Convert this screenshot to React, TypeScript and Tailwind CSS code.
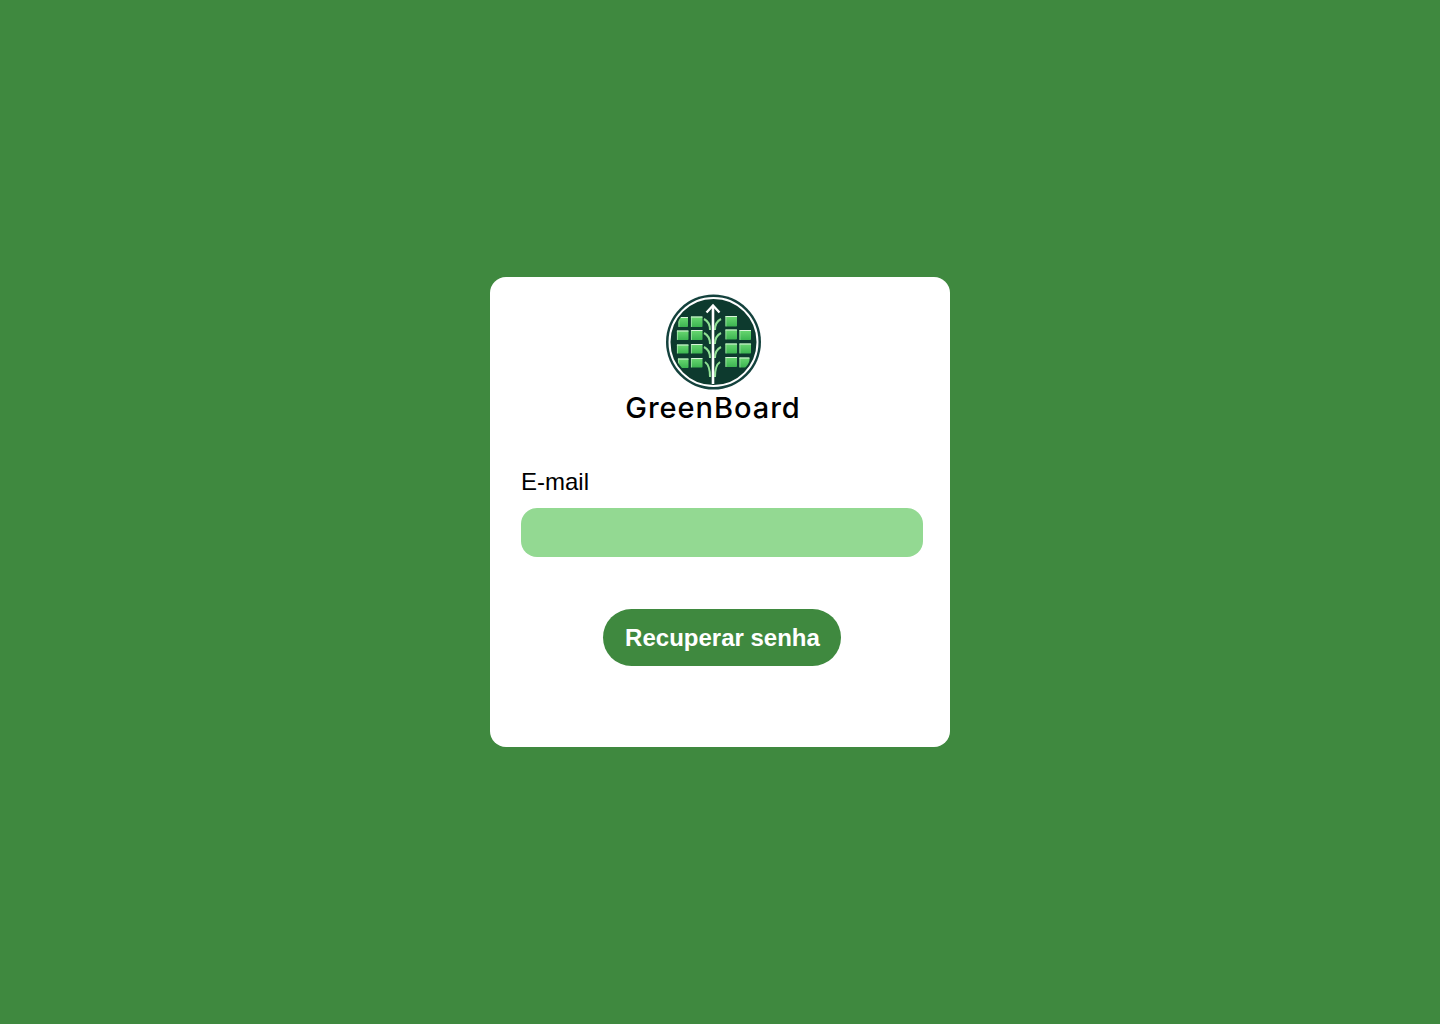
import React from 'react';

const squares = [
  [12.5, 23, 9.5, 10], [25, 22.5, 11.5, 10.5],
  [11, 36.5, 11.5, 9.5], [25, 36, 11.5, 10],
  [11, 50.5, 11.5, 9], [25, 50, 11.5, 9.5],
  [12, 64.5, 10.5, 9.5], [25, 64, 11.5, 9.5],
  [59.5, 22, 11.5, 10.5],
  [59.5, 35.5, 11.5, 10], [73.5, 36, 11.5, 10],
  [59.5, 49.5, 11.5, 10], [73.5, 49.5, 11.5, 10],
  [59.5, 63, 11.5, 10], [73.5, 63.5, 10, 10],
];

const branches = [
  'M38 25C42 27 44 30 44 36',
  'M38 39C42 41 44 44 44 50',
  'M38 53C42 55 44 58 44 64',
  'M39 68C42 70 44 73 44 83',
  'M55 25C51 27 49 30 49 36',
  'M55 39C51 41 49 44 49 50',
  'M55 53C51 55 49 58 49 64',
  'M54 68C51 70 49 73 49 83',
];

function Logo() {
  return (
    <svg width="96" height="96" viewBox="0 0 96 96" className="block ml-[2px]">
      <defs>
        <clipPath id="inner">
          <circle cx="47.5" cy="48" r="41" />
        </clipPath>
        <linearGradient id="tile" x1="0" y1="0" x2="0" y2="1">
          <stop offset="0" stopColor="#6ad872" />
          <stop offset="1" stopColor="#3cb551" />
        </linearGradient>
      </defs>
      <circle cx="47.5" cy="48" r="47.5" fill="#14423d" />
      <circle cx="47.5" cy="48" r="44" fill="#0d3a2e" stroke="#ffffff" strokeWidth="2" />
      <g clipPath="url(#inner)">
        {squares.map(([x, y, w, h], i) => (
          <g key={i}>
            <rect x={x} y={y} width={w} height={h} rx="0.8" fill="url(#tile)" />
            <path d={`M${x} ${y + 0.5}H${x + w}`} stroke="#e6f9e6" strokeWidth="0.9" />
            <path d={`M${x + 0.4} ${y}V${y + h}`} stroke="#b8efbc" strokeWidth="0.7" />
          </g>
        ))}
        {branches.map((d, i) => (
          <path key={i} d={d} fill="none" stroke="#8fe093" strokeWidth="2" />
        ))}
      </g>
      <path d="M47 90V12" stroke="#ffffff" strokeWidth="2.6" fill="none" />
      <path d="M40.5 18.5L47 11.5L53.5 18.5" stroke="#ffffff" strokeWidth="2.3" fill="none" />
    </svg>
  );
}

export default function App() {
  return (
    <div className="min-h-screen bg-[#3f893f] flex items-center justify-center font-['Liberation_Sans',Arial,sans-serif]">
      <div className="w-[460px] h-[470px] bg-white rounded-2xl pt-[17px] pl-[31px] pr-[27px]">
        {/* Logo */}
        <div className="flex flex-col items-center pr-[18px]">
          <Logo />
          <div className="mt-[1px] text-[29px] leading-[34px] font-medium tracking-[0.95px] text-black font-['Inter',sans-serif]">GreenBoard</div>
        </div>

        <label className="block mt-[43px] text-2xl leading-[28px] text-black">E-mail</label>
        <input type="email" className="block w-full h-[49px] mt-[12px] rounded-2xl bg-[#93d992] px-4 outline-none" />

        <div className="flex justify-center mt-[52px]">
          <button className="h-[57px] w-[238px] pl-px rounded-full bg-[#3f893f] text-white text-2xl font-bold">
            Recuperar senha
          </button>
        </div>
      </div>
    </div>
  );
}
